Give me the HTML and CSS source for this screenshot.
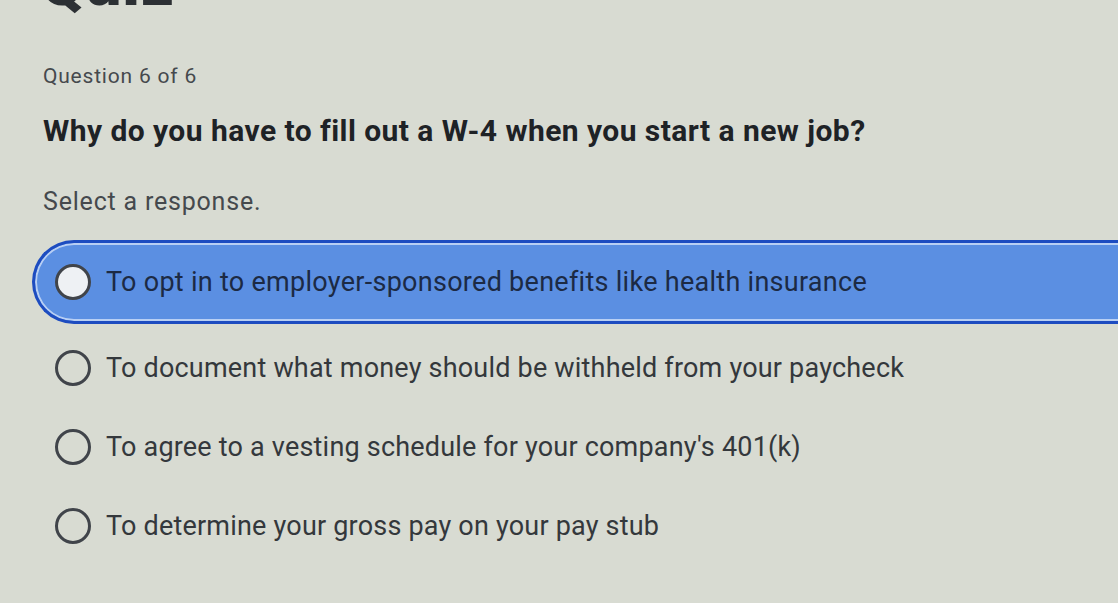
FILE: index.html
```html
<!DOCTYPE html>
<html>
<head>
<meta charset="utf-8">
<link rel="stylesheet" href="styles.css">
</head>
<body>
<div class="page">
  <h1 class="title">Quiz</h1>
  <div class="counter">Question 6 of 6</div>
  <div class="question">Why do you have to fill out a W-4 when you start a new job?</div>
  <div class="prompt">Select a response.</div>
  <div class="options">
    <div class="option selected"><span class="radio"></span><span class="label">To opt in to employer-sponsored benefits like health insurance</span></div>
    <div class="option"><span class="radio"></span><span class="label">To document what money should be withheld from your paycheck</span></div>
    <div class="option"><span class="radio"></span><span class="label">To agree to a vesting schedule for your company's 401(k)</span></div>
    <div class="option"><span class="radio"></span><span class="label">To determine your gross pay on your pay stub</span></div>
  </div>
</div>
</body>
</html>
```
FILE: styles.css
```css
html, body {
  margin: 0;
  padding: 0;
  height: 100%;
  overflow: hidden;
  background: #d8dbd2;
}
body {
  font-family: Roboto, "Liberation Sans", sans-serif;
  color: #33373b;
}
.page {
  padding-left: 43px;
}
.title {
  margin: -48px 0 0 -3px;
  font-size: 64px;
  font-weight: 900;
  color: #2c3034;
  line-height: 64px;
  height: 64px;
  letter-spacing: 1px;
}
.counter {
  margin-top: 47px;
  font-size: 21px;
  color: #45494d;
  line-height: 26px;
  letter-spacing: 0.8px;
}
.question {
  margin-top: 24px;
  font-size: 30px;
  font-weight: 700;
  color: #1e2226;
  line-height: 36px;
  letter-spacing: 0.45px;
}
.prompt {
  margin-top: 38px;
  font-size: 25px;
  color: #45494d;
  line-height: 30px;
  letter-spacing: 0.8px;
}
.options {
  margin-top: 23px;
  margin-left: -11px;
  margin-right: -60px;
}
.option {
  display: flex;
  align-items: center;
  height: 79px;
  padding-left: 23px;
  box-sizing: border-box;
}
.option.selected {
  height: 84px;
  margin-bottom: 4px;
  background: #5b8fe2;
  border: 3px solid #1d4cc0;
  border-right: none;
  border-radius: 44px 0 0 44px;
  box-shadow: inset 0 0 0 2px #b8cff4;
  padding-left: 20px;
}
.radio {
  width: 36px;
  height: 36px;
  box-sizing: border-box;
  border: 3px solid #40444a;
  border-radius: 50%;
  flex: 0 0 auto;
  margin-right: 15px;
}
.selected .radio {
  background: #eef1f4;
}
.label {
  font-size: 27px;
  color: #34383c;
  letter-spacing: 0.2px;
}
.selected .label {
  color: #1c2a44;
  letter-spacing: 0.28px;
}
```
